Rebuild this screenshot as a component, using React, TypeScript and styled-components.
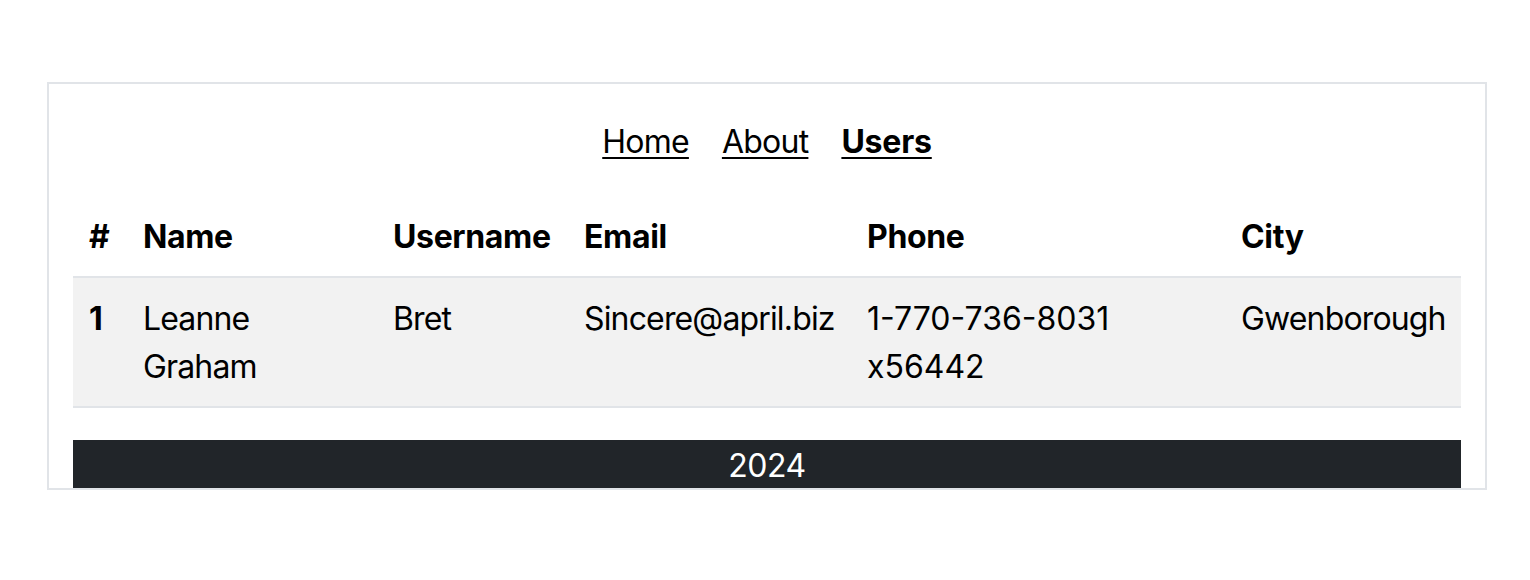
import React from 'react';
import styled, { createGlobalStyle } from 'styled-components';

const GlobalStyle = createGlobalStyle`
	body {
		margin: 0;
		background: #fff;
		font-family: Inter, "Noto Sans", sans-serif;
		color: #000;
	}
`;

const Page = styled.div`
	padding: 82px 0 0 47px;
`;

const Frame = styled.div`
	width: 1440px;
	box-sizing: border-box;
	border: 2px solid #e1e4e8;
	padding: 0 24px;
`;

const Nav = styled.nav`
	display: flex;
	justify-content: center;
	gap: 33px;
	padding: 34px 0 30px;
`;

const NavLink = styled.a<{ $active?: boolean }>`
	font-size: 32px;
	line-height: 48px;
	color: #000;
	text-decoration: underline;
	text-underline-offset: 4px;
	text-decoration-thickness: 2px;
	font-weight: ${(p) => (p.$active ? 700 : 400)};
	letter-spacing: ${(p) => (p.$active ? '-0.2px' : '-0.75px')};
`;

const Table = styled.table`
	width: 100%;
	table-layout: fixed;
	border-collapse: collapse;
	font-size: 32px;
	line-height: 48px;
`;

const HeadCell = styled.th`
	text-align: left;
	vertical-align: top;
	font-weight: 700;
	padding: 17px 16px 15px;
	border-bottom: 2px solid #e1e4e8;
	white-space: nowrap;
	letter-spacing: -0.35px;
`;

const Row = styled.tr`
	background: #f2f2f2;
	border-bottom: 2px solid #e1e4e8;
`;

const Cell = styled.td<{ $bold?: boolean }>`
	text-align: left;
	vertical-align: top;
	padding: 17px 16px 15px;
	font-weight: ${(p) => (p.$bold ? 700 : 400)};
	letter-spacing: ${(p) => (p.$bold ? '0' : '-0.85px')};
`;

// phone digits run a touch wider in the reference
const PhoneCell = styled(Cell)`
	letter-spacing: 0;
`;

const Footer = styled.footer`
	margin-top: 32px;
	background: #212529;
	color: #fff;
	text-align: center;
	font-size: 32px;
	line-height: 48px;
	padding-top: 2px;
	height: 48px;
	box-sizing: border-box;
	letter-spacing: -0.5px;
`;

const columns = [
	{ label: '#', width: 54 },
	{ label: 'Name', width: 250 },
	{ label: 'Username', width: 191 },
	{ label: 'Email', width: 283 },
	{ label: 'Phone', width: 374 },
	{ label: 'City', width: 236 },
];

const users = [
	{
		id: 1,
		name: 'Leanne Graham',
		username: 'Bret',
		email: 'Sincere@april.biz',
		phone: '1-770-736-8031 x56442',
		city: 'Gwenborough',
	},
];

const App = () => {
	return (
		<>
			<GlobalStyle />
			<Page>
				<Frame>
					<Nav>
						<NavLink href="#">Home</NavLink>
						<NavLink href="#">About</NavLink>
						<NavLink href="#" $active>
							Users
						</NavLink>
					</Nav>
					<Table>
						<colgroup>
							{columns.map((c) => (
								<col key={c.label} style={{ width: c.width }} />
							))}
						</colgroup>
						<thead>
							<tr>
								{columns.map((c) => (
									<HeadCell key={c.label}>{c.label}</HeadCell>
								))}
							</tr>
						</thead>
						<tbody>
							{users.map((u) => (
								<Row key={u.id}>
									<Cell $bold>{u.id}</Cell>
									<Cell>{u.name}</Cell>
									<Cell>{u.username}</Cell>
									<Cell>{u.email}</Cell>
									<PhoneCell>{u.phone}</PhoneCell>
									<Cell>{u.city}</Cell>
								</Row>
							))}
						</tbody>
					</Table>
					<Footer>2024</Footer>
				</Frame>
			</Page>
		</>
	);
};

export default App;
